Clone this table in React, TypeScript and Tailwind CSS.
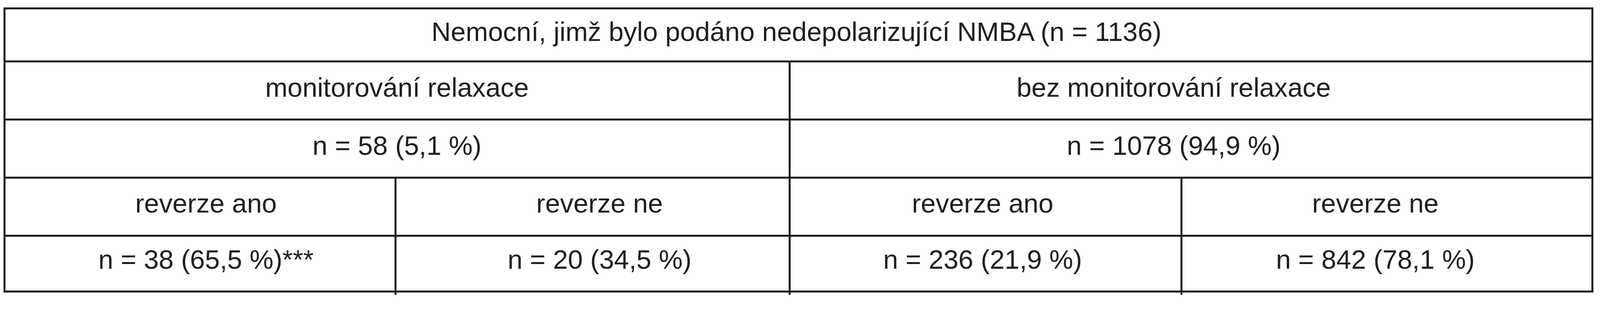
import React from "react";

const LINE = "border-[#1c1c1c]";

function Cell({ className, children }: { className: string; children: React.ReactNode }) {
	return (
		<div className={`flex items-center justify-center whitespace-nowrap ${className}`}>
			<span>{children}</span>
		</div>
	);
}

export default function App() {
	return (
		<div
			className="min-h-screen bg-white pt-[19px] pl-[0.219%] text-[1.675vw] text-[#1f1f1f]"
			style={{ fontFamily: '"Liberation Sans", Arial, Helvetica, sans-serif' }}
		>
			<div className={`w-[99.58%] border-[5px] ${LINE}`}>
				{/* header */}
				<Cell className="h-[131px] pb-[14px] pr-[0.24%]">
					Nemocní, jimž bylo podáno nedepolarizující NMBA (n = 1136)
				</Cell>

				{/* monitoring split */}
				<div className={`flex h-[149px] border-t-[5px] ${LINE}`}>
					<Cell className="w-[49.38%] pb-[14px]">monitorování relaxace</Cell>
					<Cell className={`flex-1 border-l-[5px] ${LINE} pb-[14px] pr-[2.17%]`}>
						bez monitorování relaxace
					</Cell>
				</div>
				<div className={`flex h-[149px] border-t-[5px] ${LINE}`}>
					<Cell className="w-[49.38%] pb-[14px]">n = 58 (5,1 %)</Cell>
					<Cell className={`flex-1 border-l-[5px] ${LINE} pb-[14px] pr-[2.17%]`}>
						n = 1078 (94,9 %)
					</Cell>
				</div>

				{/* reversal */}
				<div className={`flex h-[149px] border-t-[5px] ${LINE}`}>
					<Cell className="w-[24.54%] pb-[16px] pl-[0.75%]">reverze ano</Cell>
					<Cell className={`w-[24.84%] border-l-[5px] ${LINE} pb-[16px] pl-[0.88%]`}>reverze ne</Cell>
					<Cell className={`w-[24.72%] border-l-[5px] ${LINE} pb-[16px] pr-[0.37%]`}>reverze ano</Cell>
					<Cell className={`flex-1 border-l-[5px] ${LINE} pb-[16px] pr-[1.46%]`}>reverze ne</Cell>
				</div>
				<div className={`flex h-[143px] border-t-[5px] ${LINE}`}>
					<Cell className="w-[24.54%] pb-[20px] pl-[0.75%]">n = 38 (65,5 %)***</Cell>
					<Cell className={`w-[24.84%] border-l-[5px] ${LINE} pb-[20px] pl-[0.88%]`}>n = 20 (34,5 %)</Cell>
					<Cell className={`w-[24.72%] border-l-[5px] ${LINE} pb-[20px] pr-[0.37%]`}>n = 236 (21,9 %)</Cell>
					<Cell className={`flex-1 border-l-[5px] ${LINE} pb-[20px] pr-[1.46%]`}>n = 842 (78,1 %)</Cell>
				</div>
			</div>

			{/* column rules run a little past the bottom edge */}
			<div className="flex h-[6px] w-[99.58%] px-[5px]">
				<div className="w-[24.54%]" />
				<div className={`w-[24.84%] border-l-[5px] ${LINE}`} />
				<div className={`w-[24.72%] border-l-[5px] ${LINE}`} />
				<div className={`flex-1 border-l-[5px] ${LINE}`} />
			</div>
		</div>
	);
}
